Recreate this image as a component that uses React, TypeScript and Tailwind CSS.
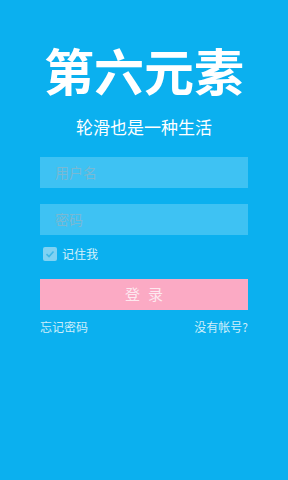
import React from "react";

export default function App() {
  return (
    <div
      className="w-[288px] h-[480px] bg-[#0bb0ef] flex flex-col items-center overflow-hidden"
      style={{ fontFamily: '"Noto Sans CJK SC", "Noto Sans", sans-serif' }}
    >
      <div className="mt-[39px] h-[60px] flex items-center text-white text-[50px] font-bold leading-none tracking-[0px]">
        第六元素
      </div>
      <div className="mt-[16px] text-white text-[17px] leading-[24px]">轮滑也是一种生活</div>
      <div className="mt-[18px] w-[208px] flex flex-col">
        <div className="h-[31px] bg-[#3ec2f3] flex items-center px-[15px] text-[14px] text-[#78b9d4]">
          用户名
        </div>
        <div className="mt-[16px] h-[31px] bg-[#3ec2f3] flex items-center px-[15px] text-[14px] text-[#78b9d4]">
          密码
        </div>
        <div className="mt-[12px] h-[14px] flex items-center gap-[5px] pl-[3px]">
          <div className="w-[14px] h-[14px] rounded-[2px] bg-[#7fd2f3] flex items-center justify-center">
            <svg width="10" height="10" viewBox="0 0 10 10">
              <path d="M1.5 5.2 L4 7.5 L8.5 2.5" stroke="#3cb8e8" strokeWidth="1.6" fill="none" />
            </svg>
          </div>
          <span className="text-[12px] text-[#d8f2fc] leading-none">记住我</span>
        </div>
        <div className="mt-[18px] h-[31px] bg-[#fbaac4] flex items-center justify-center text-[15px] text-[#fde8ef] tracking-[8px] pl-[8px]">
          登录
        </div>
        <div className="mt-[9px] flex justify-between text-[12px] text-[#cdeefb] leading-[16px]">
          <span>忘记密码</span>
          <span>没有帐号?</span>
        </div>
      </div>
    </div>
  );
}
